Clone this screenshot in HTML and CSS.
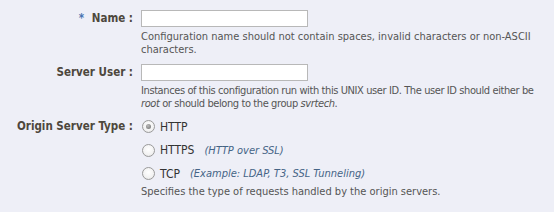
FILE: index.html
```html
<!DOCTYPE html>
<html>
<head>
<meta charset="utf-8">
<link rel="stylesheet" href="styles.css">
</head>
<body>
<div class="form">
  <div class="row row-name">
    <div class="label"><span class="req">*</span> Name :</div>
    <div class="field">
      <div class="input"></div>
      <div class="help">Configuration name should not contain spaces, invalid characters or non-ASCII characters.</div>
    </div>
  </div>
  <div class="row row-user">
    <div class="label">Server User :</div>
    <div class="field">
      <div class="input"></div>
      <div class="help help-user">Instances of this configuration run with this UNIX user ID. The user ID should either be <i>root</i> or should belong to the group <i>svrtech</i>.</div>
    </div>
  </div>
  <div class="row row-type">
    <div class="label label-type">Origin Server Type :</div>
    <div class="field">
      <div class="options">
        <div class="option"><span class="radio checked"></span><span class="opt-text">HTTP</span></div>
        <div class="option"><span class="radio"></span><span class="opt-text">HTTPS</span><span class="hint">(HTTP over SSL)</span></div>
        <div class="option"><span class="radio"></span><span class="opt-text">TCP</span><span class="hint">(Example: LDAP, T3, SSL Tunneling)</span></div>
      </div>
      <div class="help help-type">Specifies the type of requests handled by the origin servers.</div>
    </div>
  </div>
</div>
</body>
</html>
```
FILE: styles.css
```css
html, body {
  margin: 0;
  padding: 0;
  background: #eeeff7;
}
body {
  font-family: "DejaVu Sans Condensed", "DejaVu Sans", sans-serif;
  font-size: 11px;
  color: #555555;
}
.form {
  padding-top: 10px;
  display: flex;
  flex-direction: column;
}
.row {
  display: flex;
  column-gap: 8px;
}
.row-user {
  margin-top: 8px;
}
.row-type {
  margin-top: 10px;
}
.label {
  width: 133px;
  flex: none;
  text-align: right;
  font-weight: bold;
  color: #4d473d;
  font-size: 11.5px;
  line-height: 17px;
  white-space: nowrap;
}
.label-type {
  line-height: 13px;
}
.req {
  color: #4a72b0;
  margin-right: 4px;
}
.field {
  width: 408px;
}
.input {
  width: 165px;
  height: 15px;
  background: #ffffff;
  border: 1px solid #b8b8b8;
}
.help {
  margin-top: 3px;
  line-height: 13px;
  color: #555555;
}
.help-user {
  letter-spacing: -0.4px;
}
.options {
  display: flex;
  flex-direction: column;
  row-gap: 10.5px;
}
.option {
  display: flex;
  align-items: center;
  height: 13px;
}
.radio {
  width: 11px;
  height: 11px;
  border: 1px solid #9a9a9a;
  border-radius: 50%;
  background: radial-gradient(circle at 50% 40%, #ffffff 0%, #f2f2f2 60%, #dcdcdc 100%);
  margin-left: 1px;
  margin-right: 5px;
  flex: none;
  display: flex;
  align-items: center;
  justify-content: center;
}
.radio.checked::after {
  content: "";
  width: 5px;
  height: 5px;
  border-radius: 50%;
  background: radial-gradient(circle at 40% 35%, #bbbbbb, #6e6e6e);
}
.opt-text {
  font-size: 12px;
  color: #333333;
}
.hint {
  margin-left: 10px;
  font-style: italic;
  color: #456486;
  font-size: 11px;
}
.help-type {
  margin-top: 5px;
}
```
